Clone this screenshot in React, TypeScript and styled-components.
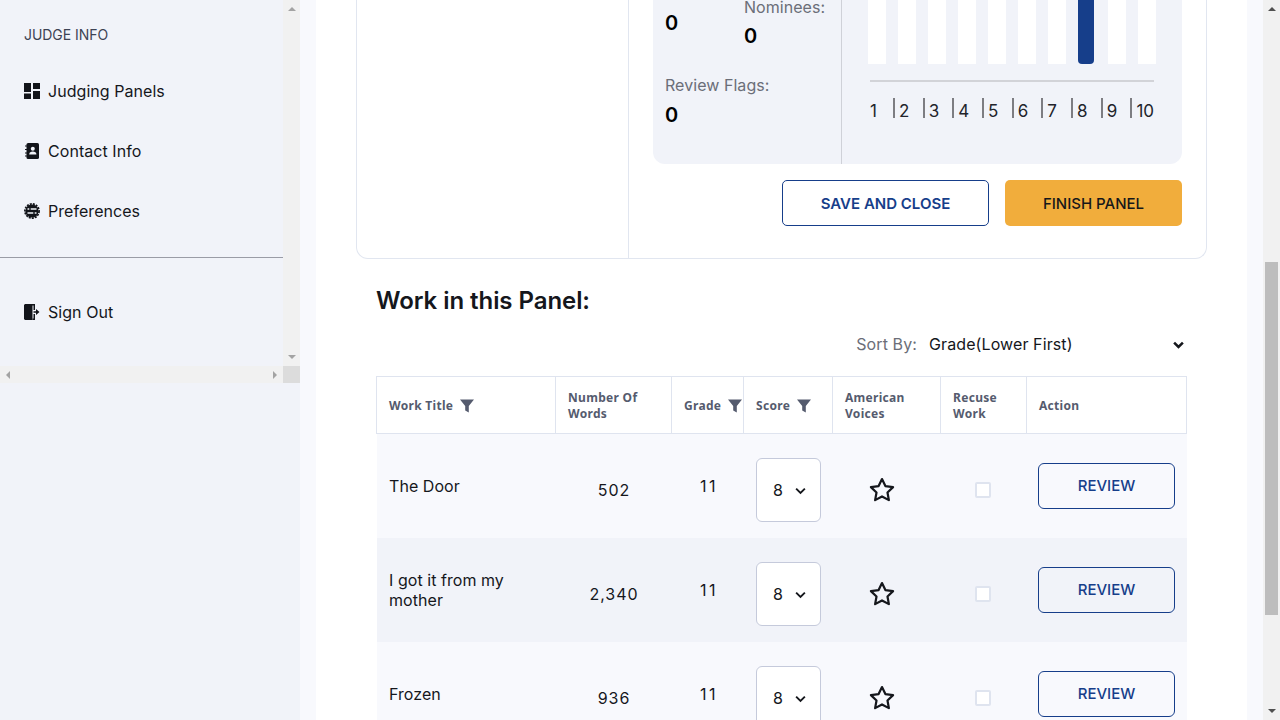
import React from 'react';
import styled, { createGlobalStyle } from 'styled-components';

const Global = createGlobalStyle`
  html, body { margin: 0; padding: 0; height: 720px; overflow: hidden; background: #f8f9fd; }
  body { font-family: Inter, "Liberation Sans", sans-serif; color: #15171c; }
  * { box-sizing: border-box; }
`;

const Page = styled.div`display: flex; width: 1280px; height: 720px; overflow: hidden;`;
const Sidebar = styled.aside`width: 300px; flex: none; background: #f1f3f9; display: flex; flex-direction: column;`;
const SideFrame = styled.div`height: 366px; display: flex;`;
const SideBody = styled.div`width: 283px; flex: none;`;
const SideHeading = styled.div`font-size: 14px; line-height: 17px; color: #3d4354; padding: 26px 0 0 24px; height: 61px; letter-spacing: -.05px;`;
const SideItem = styled.div`display: flex; align-items: center; gap: 8px; padding-left: 24px; height: 60px; font-size: 16px; color: #15171c; letter-spacing: .05px;`;
const SideRule = styled.div`height: 1px; background: #9a9ca6; margin-top: 16px; margin-bottom: 24px;`;
const VBar = styled.div`width: 17px; flex: none; background: #f1f1f1; display: flex; flex-direction: column; justify-content: space-between; align-items: center;`;
const HBar = styled.div`height: 17px; display: flex; background: #f1f1f1;`;
const HTrack = styled.div`width: 283px; display: flex; justify-content: space-between; align-items: center; padding: 0 6px;`;
const Corner = styled.div`width: 17px; background: #dcdcdc;`;
const Arrow = styled.span<{ $d: 'up' | 'down' | 'left' | 'right'; $c?: string }>`
  width: 0; height: 0; display: block; border: 4px solid transparent; flex: none;
  ${p => p.$d === 'up' && `border-top: 0; border-bottom: 4px solid ${p.$c || '#a3a3a3'}; margin-top: 7px;`}
  ${p => p.$d === 'down' && `border-bottom: 0; border-top: 4px solid ${p.$c || '#a3a3a3'}; margin-bottom: 7px;`}
  ${p => p.$d === 'left' && `border-left: 0; border-right: 4px solid #a3a3a3;`}
  ${p => p.$d === 'right' && `border-right: 0; border-left: 4px solid #a3a3a3;`}
`;
const PageBar = styled.div`width: 17px; flex: none; background: #f1f1f1; display: flex; flex-direction: column; align-items: center; justify-content: flex-start;`;
const Thumb = styled.div`width: 13px; height: 353px; margin-top: 251px; margin-bottom: auto; background: #bdbdbd; flex: none;`;

const Main = styled.main`width: 931px; flex: none; margin: 0 16px; background: #fff; padding: 0 40px; height: 720px; overflow: hidden;`;
const TopCard = styled.section`height: 259px; width: 851px; border: 1px solid #e1e6f0; border-top: 0; border-radius: 0 0 12px 12px; display: flex; overflow: hidden;`;
const CardLeft = styled.div`width: 272px; flex: none; border-right: 1px solid #e1e6f0;`;
const CardRight = styled.div`flex: 1; padding: 0 24px; display: flex; flex-direction: column;`;
const Stats = styled.div`height: 164px; background: #f1f3f9; border-radius: 0 0 12px 12px; display: flex;`;
const StatsLeft = styled.div`width: 189px; flex: none; border-right: 1px solid #cfd1d8; padding-left: 12px;`;
const StatRow = styled.div`display: flex; height: 71px;`;
const Stat = styled.div<{ $w: number; $pt: number }>`width: ${p => p.$w}px; padding-top: ${p => p.$pt}px; flex: none;`;
const StatLabel = styled.div`font-size: 16px; line-height: 19px; color: #6b6e78; letter-spacing: .05px;`;
const NomineesLabel = styled(StatLabel)`margin-top: -2px; line-height: 18px;`;
const StatValue = styled.div`font-size: 20px; line-height: 24px; font-weight: 600; color: #000; margin-top: 8px;`;
const FirstValue = styled(StatValue)`margin-top: 11px;`;
const Chart = styled.div`flex: 1; padding-left: 26px; width: 340px;`;
const Bars = styled.div`display: flex; height: 64px; gap: 12px;`;
const Bar = styled.div<{ $on?: boolean }>`width: ${p => (p.$on ? 16 : 18)}px; margin-right: ${p => (p.$on ? 2 : 0)}px; background: ${p => (p.$on ? '#163e8a' : '#fff')}; border-radius: ${p => (p.$on ? '0 0 4px 4px' : '0')};`;
const Axis = styled.div`width: 284px; margin: 16px 0 0 2px; height: 2px; background: #d2d3d8;`;
const Ticks = styled.div`display: flex; margin: 16px 0 0 2px; width: 290px;`;
const Tick = styled.div<{ $first?: boolean }>`flex: ${p => (p.$first ? '0 0 23px' : '1')}; height: 20px; border-left: ${p => (p.$first ? '0' : '2px solid #7d7d82')}; font-size: 17px; line-height: 26px; color: #22242b; padding-left: ${p => (p.$first ? 0 : 4)}px; white-space: nowrap;`;
const Actions = styled.div`display: flex; justify-content: flex-end; gap: 16px; margin-top: 16px;`;
const SaveBtn = styled.div`width: 207px; height: 46px; display: flex; align-items: center; justify-content: center; border: 1px solid #163e8a; border-radius: 5px; background: #fff; color: #163e8a; font-size: 15px; font-weight: 600; `;
const FinishBtn = styled.div`width: 177px; height: 46px; display: flex; align-items: center; justify-content: center; border-radius: 5px; background: #f1ad3c; color: #16171a; font-size: 15px; font-weight: 500;`;
const ReviewBtn = styled.div`width: 137px; height: 46px; display: flex; align-items: center; justify-content: center; padding-bottom: 2px; border: 1px solid #163e8a; border-radius: 6px; background: transparent; color: #163e8a; font-size: 15px; font-weight: 500;`;

const Section = styled.section`width: 811px; margin-left: 20px;`;
const Heading = styled.h2`margin: 0; padding-top: 27px; font-size: 24px; line-height: 29px; font-weight: 600; color: #15171c; letter-spacing: -.06px;`;
const SortRow = styled.div`display: flex; align-items: center; justify-content: flex-end; height: 20px; margin-top: 19px; font-size: 16px; letter-spacing: .1px;`;
const SortLabel = styled.span`color: #6b6e78; margin-right: 12px;`;
const SortValue = styled.span`width: 258px; display: flex; justify-content: space-between; align-items: center; color: #15171c; padding-right: 1.5px;`;
const Grid = styled.div`margin-top: 22px;`;
const HeadRow = styled.div`display: grid; grid-template-columns: 179px 116px 72px 89px 108px 86px 161px; height: 58px; border: 1px solid #dfe4ef;`;
const HeadCell = styled.div`display: flex; align-items: center; gap: 7px; padding: 1px 0 0 12px; border-right: 1px solid #dfe4ef; font-family: "Noto Sans", "Liberation Sans", sans-serif; font-size: 12px; line-height: 16px; font-weight: 700; color: #555b6e; letter-spacing: .3px; &:last-child { border-right: 0; }`;
const Row = styled.div<{ $alt?: boolean }>`display: grid; grid-template-columns: 179px 116px 72px 89px 98px 104px 152px; height: 104px; margin-left: 1px; width: 810px; background: ${p => (p.$alt ? '#f1f3f9' : '#f8f9fd')};`;
const TitleCell = styled.div`padding: 0 32px 0 12px; font-size: 16px; line-height: 20px; color: #15171c; align-self: center; letter-spacing: .05px;`;
const NumCell = styled.div`text-align: center; font-size: 16px; letter-spacing: 1px; align-self: center; padding-top: 8px;`;
const GradeCell = styled.div`text-align: center; font-size: 16px; letter-spacing: 2.5px; align-self: center; padding-left: 2px;`;
const ScoreCell = styled.div`display: flex; align-items: center; padding: 8px 0 0 12px;`;
const ScoreBox = styled.div`width: 65px; height: 64px; border: 1px solid #c5cadb; border-radius: 6px; background: #fff; display: flex; align-items: center; justify-content: space-between; padding: 0 12px 0 16px; font-size: 16px;`;
const CenterCell = styled.div`display: flex; align-items: center; justify-content: center; padding-top: 8px;`;
const Check = styled.div`width: 16px; height: 16px; border: 2px solid #dfe4ef; background: #fff; border-radius: 2px;`;
const ActionCell = styled.div`display: flex; align-items: center; padding-left: 3px;`;
const FunnelIcon = styled.svg`flex: none;`;

const Chev = ({ w = 1.5 }: { w?: number }) => (
  <svg width="15" height="15" viewBox="0 0 12 12" fill="none" stroke="#15171c" strokeWidth={w}><path d="M2.5 4.5 6 8l3.5-3.5" /></svg>
);
const Funnel = () => (
  <FunnelIcon width="14" height="14" viewBox="0 0 14 14" fill="#555b6e"><path d="M0 .5h14L8.8 7v6.5L5.2 11.5V7z" /></FunnelIcon>
);
const Star = () => (
  <svg width="28" height="28" viewBox="0 0 24 24" fill="none" stroke="#15171c" strokeWidth="1.9" strokeLinejoin="round"><path d="m12 2.6 2.9 6 6.6.9-4.8 4.6 1.2 6.6-5.9-3.2-5.9 3.2 1.2-6.6L2.5 9.5l6.6-.9z" /></svg>
);
const IconPanels = () => (
  <svg width="16" height="16" viewBox="0 0 16 16" fill="#12141a"><rect x="0" y="0" width="7" height="9" /><rect x="9" y="0" width="7" height="6" /><rect x="0" y="10.5" width="7" height="5.5" /><rect x="9" y="8" width="7" height="8" /></svg>
);
const IconContact = () => (
  <svg width="16" height="16" viewBox="0 0 16 16"><rect x="2.5" y="0" width="12.5" height="16" rx="1.6" fill="#12141a" /><path d="M1 3h2.5M1 6.5h2.5M1 10h2.5M1 13h2.5" stroke="#12141a" strokeWidth="1" /><circle cx="8.8" cy="5.8" r="2" fill="#f1f3f9" /><path d="M5.2 11.4c0-2 1.6-2.9 3.6-2.9s3.6.9 3.6 2.9z" fill="#f1f3f9" /></svg>
);
const IconPrefs = () => (
  <svg width="16" height="16" viewBox="0 0 16 16"><circle cx="8" cy="8" r="7.1" fill="none" stroke="#12141a" strokeWidth="1.7" strokeDasharray="2 1.1" /><circle cx="8" cy="8" r="6.6" fill="#12141a" /><path d="M3.5 6h9M3.5 10h9" stroke="#f1f3f9" strokeWidth="1.4" /><path d="M6 5v2M10 9v2" stroke="#12141a" strokeWidth="1.4" /></svg>
);
const IconOut = () => (
  <svg width="16" height="16" viewBox="0 0 16 16" fill="#12141a"><path d="M0 1 1 0h10v6H9.5V1.5h-1V16H1L0 15z" /><path d="M8.5 14.5H9.5V10H11V16H8.5z" /><path d="M9.5 7.2h2.5V5l3.5 3-3.5 3V8.8H9.5z" /></svg>
);

const rows = [
  { t: 'The Door', n: '502' },
  { t: 'I got it from my mother', n: '2,340', alt: true },
  { t: 'Frozen', n: '936' },
];
const scale = [1, 2, 3, 4, 5, 6, 7, 8, 9, 10];

export default function App() {
  return (
    <Page>
      <Global />
      <Sidebar>
        <SideFrame>
          <SideBody>
            <SideHeading>JUDGE INFO</SideHeading>
            <SideItem><IconPanels />Judging Panels</SideItem>
            <SideItem><IconContact />Contact Info</SideItem>
            <SideItem><IconPrefs />Preferences</SideItem>
            <SideRule />
            <SideItem><IconOut />Sign Out</SideItem>
          </SideBody>
          <VBar><Arrow $d="up" /><Arrow $d="down" /></VBar>
        </SideFrame>
        <HBar>
          <HTrack><Arrow $d="left" /><Arrow $d="right" /></HTrack>
          <Corner />
        </HBar>
      </Sidebar>
      <Main>
        <TopCard>
          <CardLeft />
          <CardRight>
            <Stats>
              <StatsLeft>
                <StatRow>
                  <Stat $w={79} $pt={0}><FirstValue>0</FirstValue></Stat>
                  <Stat $w={98} $pt={0}>
                    <NomineesLabel>Nominees:</NomineesLabel>
                    <StatValue>0</StatValue>
                  </Stat>
                </StatRow>
                <Stat $w={170} $pt={5}>
                  <StatLabel>Review Flags:</StatLabel>
                  <StatValue>0</StatValue>
                </Stat>
              </StatsLeft>
              <Chart>
                <Bars>
                  {scale.map(i => <Bar key={i} $on={i === 8} />)}
                </Bars>
                <Axis />
                <Ticks>
                  {scale.map(i => <Tick key={i} $first={i === 1}>{i}</Tick>)}
                </Ticks>
              </Chart>
            </Stats>
            <Actions>
              <SaveBtn>SAVE AND CLOSE</SaveBtn>
              <FinishBtn>FINISH PANEL</FinishBtn>
            </Actions>
          </CardRight>
        </TopCard>
        <Section>
          <Heading>Work in this Panel:</Heading>
          <SortRow>
            <SortLabel>Sort By:</SortLabel>
            <SortValue>Grade(Lower First)<Chev w={2} /></SortValue>
          </SortRow>
          <Grid>
            <HeadRow>
              <HeadCell>Work Title <Funnel /></HeadCell>
              <HeadCell>Number Of<br />Words</HeadCell>
              <HeadCell>Grade <Funnel /></HeadCell>
              <HeadCell>Score <Funnel /></HeadCell>
              <HeadCell>American<br />Voices</HeadCell>
              <HeadCell>Recuse<br />Work</HeadCell>
              <HeadCell>Action</HeadCell>
            </HeadRow>
            {rows.map(r => (
              <Row key={r.t} $alt={r.alt}>
                <TitleCell>{r.t}</TitleCell>
                <NumCell>{r.n}</NumCell>
                <GradeCell>11</GradeCell>
                <ScoreCell><ScoreBox>8<Chev /></ScoreBox></ScoreCell>
                <CenterCell><Star /></CenterCell>
                <CenterCell><Check /></CenterCell>
                <ActionCell><ReviewBtn>REVIEW</ReviewBtn></ActionCell>
              </Row>
            ))}
          </Grid>
        </Section>
      </Main>
      <PageBar>
        <Arrow $d="up" $c="#505050" />
        <Thumb />
        <Arrow $d="down" $c="#505050" />
      </PageBar>
    </Page>
  );
}
